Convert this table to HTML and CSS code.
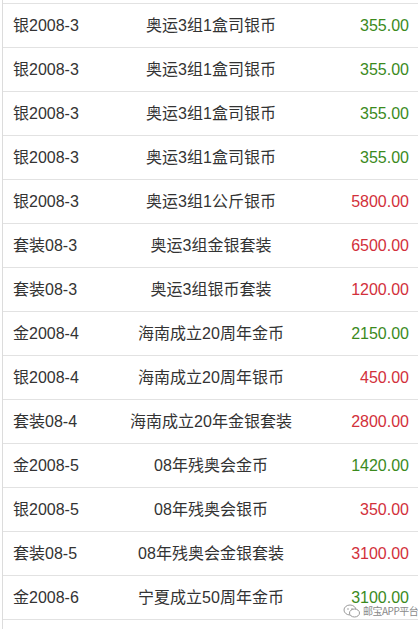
FILE: index.html
```html
<!DOCTYPE html>
<html>
<head>
<meta charset="utf-8">
<link rel="stylesheet" href="styles.css">
</head>
<body>
<div class="page">
  <div class="sliver"></div>
  <div class="row"><span class="c1">银2008-3</span><span class="c2">奥运3组1盒司银币</span><span class="c3 green">355.00</span></div>
  <div class="row"><span class="c1">银2008-3</span><span class="c2">奥运3组1盒司银币</span><span class="c3 green">355.00</span></div>
  <div class="row"><span class="c1">银2008-3</span><span class="c2">奥运3组1盒司银币</span><span class="c3 green">355.00</span></div>
  <div class="row"><span class="c1">银2008-3</span><span class="c2">奥运3组1盒司银币</span><span class="c3 green">355.00</span></div>
  <div class="row"><span class="c1">银2008-3</span><span class="c2">奥运3组1公斤银币</span><span class="c3 red">5800.00</span></div>
  <div class="row"><span class="c1">套装08-3</span><span class="c2">奥运3组金银套装</span><span class="c3 red">6500.00</span></div>
  <div class="row"><span class="c1">套装08-3</span><span class="c2">奥运3组银币套装</span><span class="c3 red">1200.00</span></div>
  <div class="row"><span class="c1">金2008-4</span><span class="c2">海南成立20周年金币</span><span class="c3 green">2150.00</span></div>
  <div class="row"><span class="c1">银2008-4</span><span class="c2">海南成立20周年银币</span><span class="c3 red">450.00</span></div>
  <div class="row"><span class="c1">套装08-4</span><span class="c2">海南成立20年金银套装</span><span class="c3 red">2800.00</span></div>
  <div class="row"><span class="c1">金2008-5</span><span class="c2">08年残奥会金币</span><span class="c3 green">1420.00</span></div>
  <div class="row"><span class="c1">银2008-5</span><span class="c2">08年残奥会银币</span><span class="c3 red">350.00</span></div>
  <div class="row"><span class="c1">套装08-5</span><span class="c2">08年残奥会金银套装</span><span class="c3 red">3100.00</span></div>
  <div class="row"><span class="c1">金2008-6</span><span class="c2">宁夏成立50周年金币</span><span class="c3 green">3100.00</span></div>
  <div class="tail"></div>
</div>
<div class="watermark">
  <svg class="wm-icon" width="18" height="16" viewBox="0 0 18 16">
    <ellipse cx="7" cy="7" rx="6" ry="5" fill="none" stroke="#9a9a9a" stroke-width="1"/>
    <ellipse cx="11.5" cy="10" rx="5" ry="4" fill="#fff" stroke="#9a9a9a" stroke-width="1"/>
    <circle cx="5" cy="6" r="0.8" fill="#9a9a9a"/>
    <circle cx="9" cy="6" r="0.8" fill="#9a9a9a"/>
  </svg>
  <span class="wm-text">邮宝APP平台</span>
</div>
</body>
</html>
```
FILE: styles.css
```css
html, body {
  margin: 0;
  padding: 0;
  background: #ffffff;
  overflow: hidden;
  height: 629px;
}
body {
  font-family: "Liberation Sans", "Noto Sans CJK SC", sans-serif;
  color: #333333;
  width: 418px;
  position: relative;
}
.page {
  margin-left: 2px;
  border-left: 1px solid #dcdcdc;
  height: 629px;
  overflow: hidden;
}
.sliver {
  box-sizing: border-box;
  height: 4px;
  border-bottom: 1px solid #e2e2e2;
}
.row {
  height: 44px;
  box-sizing: border-box;
  border-bottom: 1px solid #e2e2e2;
  display: grid;
  grid-template-columns: 1fr 1fr 1fr;
  align-items: center;
  padding: 0 9px 0 10px;
  font-size: 16px;
  line-height: 20px;
}
.tail {
  height: 10px;
}
.c1 { text-align: left; white-space: nowrap; }
.c2 { text-align: center; white-space: nowrap; }
.c3 { text-align: right; white-space: nowrap; }
.green { color: #3b8a1d; }
.red { color: #d2303b; }
.watermark {
  position: absolute;
  left: 343px;
  top: 603px;
  display: flex;
  align-items: center;
  gap: 2px;
  white-space: nowrap;
}
.wm-text {
  font-size: 10px;
  line-height: 12px;
  color: #8a8a8a;
  letter-spacing: -0.5px;
  font-family: "Noto Sans CJK SC", sans-serif;
}
```
